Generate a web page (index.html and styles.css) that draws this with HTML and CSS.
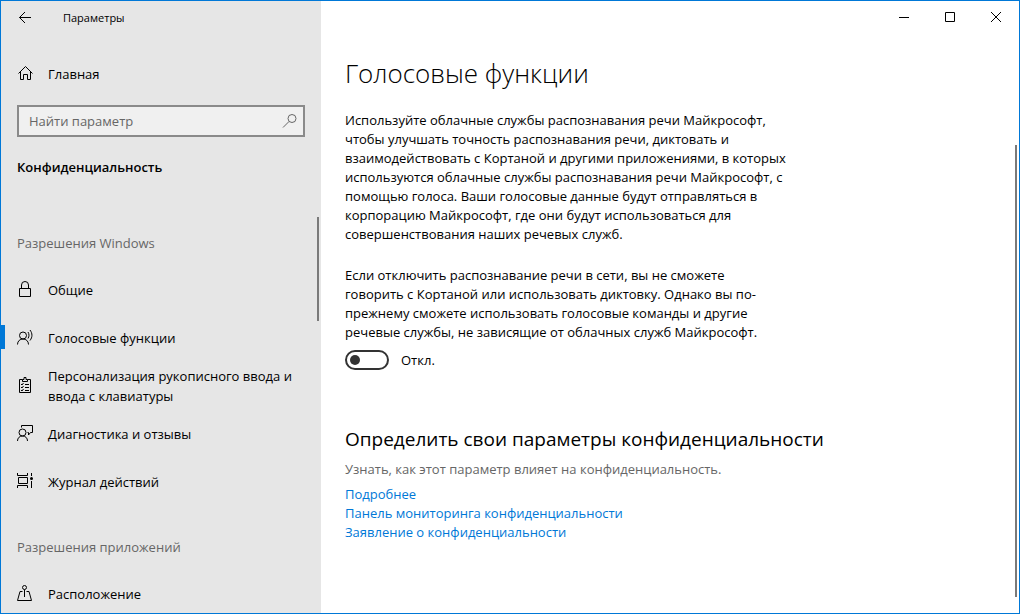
FILE: index.html
```html
<!DOCTYPE html>
<html lang="ru">
<head>
    <meta charset="UTF-8">
    <meta name="viewport" content="width=device-width, initial-scale=1.0">
    <title>Параметры</title>
    <link rel="stylesheet" href="styles.css">
</head>
<body>
    <div class="window">
        <aside class="sidebar">
            <header class="sidebar-top">
                <button type="button" class="back" aria-label="Назад">
                    <svg class="icon" viewBox="0 0 16 16"><path d="M14 8.500H2.500M8 3L2.500 8.500 8 14"/></svg>
                </button>
                <span class="app-title">Параметры</span>
            </header>

            <a class="nav-item home" href="#">
                <svg class="icon" viewBox="0 0 16 16"><path d="M1.500 8.500l7-7 7 7M3.500 7v7.500h3v-5h4v5h3V7"/></svg>
                <span>Главная</span>
            </a>

            <form class="search">
                <input type="search" class="search-input" placeholder="Найти параметр" aria-label="Найти параметр">
                <button type="submit" class="search-button" aria-label="Найти">
                    <svg class="icon" viewBox="0 0 16 16"><circle cx="10" cy="5.500" r="4"/><path d="M7 8.500l-6 6"/></svg>
                </button>
            </form>

            <h2 class="section">Конфиденциальность</h2>

            <nav class="nav">
                <h3 class="group">Разрешения Windows</h3>
                <a class="nav-item" href="#">
                    <svg class="icon" viewBox="0 0 16 16"><path d="M2.500 7.500h11v8h-11zM4.500 7.500V4a3.500 3.500 0 0 1 7 0v3.500"/></svg>
                    <span>Общие</span>
                </a>
                <a class="nav-item active" href="#" aria-current="page">
                    <svg class="icon" viewBox="0 0 16 16"><circle cx="6" cy="6.500" r="3.500"/><path d="M.5 15.500c0-3.500 2.500-5.500 5.500-5.500s5.500 2 5.500 5.500M11 3c1.300 2 1.300 4.500 0 6.500M13 1c2.600 3.500 2.600 7 0 10.500"/></svg>
                    <span>Голосовые функции</span>
                </a>
                <a class="nav-item" href="#">
                    <svg class="icon" viewBox="0 0 16 16"><path d="M5.500 2.500h-3v13h11v-13h-3M5.500 4.500v-2h1.500v-2h2v2h1.500v2zM8 7.500h4M8 10.500h4M8 13.500h4M4 7l1 1 1.500-2M4 10l1 1 1.500-2M4 13l1 1 1.500-2"/></svg>
                    <span>Персонализация рукописного ввода и ввода с клавиатуры</span>
                </a>
                <a class="nav-item" href="#">
                    <svg class="icon" viewBox="0 0 16 16"><circle cx="5.500" cy="7.500" r="3.500"/><path d="M.5 16c0-3 2-5 5-5s5 2 5 5M4.500 2.500v-2h11v7h-2l-2 2.500V7.500h-1"/></svg>
                    <span>Диагностика и отзывы</span>
                </a>
                <a class="nav-item" href="#">
                    <svg class="icon" viewBox="0 0 16 16"><path d="M.5 0v2.500h10V0M1.500 4.500h9v6h-9zM.5 15v-2.500h10V15M14.500 0v3M14.500 8v7"/><circle class="dot" cx="14.500" cy="5.500" r="1.500"/></svg>
                    <span>Журнал действий</span>
                </a>
                <h3 class="group">Разрешения приложений</h3>
                <a class="nav-item" href="#">
                    <svg class="icon" viewBox="0 0 16 16"><circle cx="7.500" cy="2.500" r="2"/><path d="M7.500 4.500V12M5.500 6.500H3l-2.500 9h14L12 6.500H9.500"/></svg>
                    <span>Расположение</span>
                </a>
            </nav>
            <div class="scrollbar scrollbar-nav"></div>
        </aside>

        <main class="main">
            <div class="caption-buttons">
                <button type="button" aria-label="Свернуть"><svg class="glyph" viewBox="0 0 10 10"><path d="M0 5.500h10"/></svg></button>
                <button type="button" aria-label="Развернуть"><svg class="glyph" viewBox="0 0 10 10"><path d="M.5.5h9v9h-9z"/></svg></button>
                <button type="button" aria-label="Закрыть"><svg class="glyph" viewBox="0 0 10 10"><path d="M0 0l10 10M10 0L0 10"/></svg></button>
            </div>

            <div class="content">
                <h1>Голосовые функции</h1>
                <p class="text">Используйте облачные службы распознавания речи Майкрософт, чтобы улучшать точность распознавания речи, диктовать и взаимодействовать с Кортаной и другими приложениями, в которых используются облачные службы распознавания речи Майкрософт, с помощью голоса. Ваши голосовые данные будут отправляться в корпорацию Майкрософт, где они будут использоваться для совершенствования наших речевых служб.</p>
                <p class="text text-narrow">Если отключить распознавание речи в сети, вы не сможете говорить с Кортаной или использовать диктовку. Однако вы по-прежнему сможете использовать голосовые команды и другие речевые службы, не зависящие от облачных служб Майкрософт.</p>
                <label class="toggle">
                    <input type="checkbox" class="switch" role="switch">
                    <span>Откл.</span>
                </label>

                <h2 class="subtitle">Определить свои параметры конфиденциальности</h2>
                <p class="hint">Узнать, как этот параметр влияет на конфиденциальность.</p>
                <ul class="links">
                    <li><a href="#">Подробнее</a></li>
                    <li><a href="#">Панель мониторинга конфиденциальности</a></li>
                    <li><a href="#">Заявление о конфиденциальности</a></li>
                </ul>
            </div>
            <div class="scrollbar scrollbar-main"></div>
        </main>
    </div>
</body>
</html>
```

FILE: styles.css
```css
* {
    box-sizing: border-box;
}
body {
    margin: 0;
    font-family: "Open Sans", "Noto Sans", sans-serif;
    font-size: 13px;
    line-height: 19px;
    color: #000;
    background: #fff;
}
h1, h2, h3, p, ul {
    margin: 0;
    padding: 0;
}
a {
    color: inherit;
    text-decoration: none;
}
button {
    display: flex;
    align-items: center;
    justify-content: center;
    padding: 0;
    border: 0;
    background: none;
    color: inherit;
}
.window {
    display: flex;
    height: 100vh;
    border: 1px solid #0078d7;
    overflow: hidden;
}
.icon {
    flex: none;
    width: 16px;
    height: 16px;
    fill: none;
    stroke: currentColor;
}
.icon .dot {
    fill: currentColor;
    stroke: none;
}

/* sidebar */
.sidebar {
    position: relative;
    flex: none;
    width: 320px;
    background: #e6e6e6;
    overflow: hidden;
}
.sidebar-top {
    display: flex;
    align-items: center;
    height: 32px;
    margin-bottom: 17px;
}
.back {
    width: 48px;
    height: 32px;
}
.app-title {
    margin-left: 14px;
    font-size: 11px;
}
.nav-item {
    position: relative;
    display: flex;
    align-items: center;
    gap: 15px;
    height: 48px;
    padding: 0 16px;
    line-height: 20px;
}
.nav-item .icon {
    margin-bottom: 2px;
}
.nav-item.active::before {
    content: "";
    position: absolute;
    left: 0;
    top: 11px;
    width: 4px;
    height: 24px;
    background: #0078d7;
}
.search {
    display: flex;
    height: 32px;
    margin: 7px 16px 20px;
    border: 2px solid #8a8a8a;
    background: #f0f0f0;
}
.search-input {
    flex: 1;
    min-width: 0;
    padding: 0 0 0 10px;
    border: 0;
    outline: 0;
    background: none;
    font: inherit;
}
.search-input::placeholder {
    color: #666;
}
.search-button {
    width: 26px;
    color: #666;
}
.section {
    margin: 0 16px 25px;
    font-size: 13px;
    font-weight: 600;
    line-height: 20px;
}
.group {
    padding: 32px 16px 14px;
    font-size: 13px;
    font-weight: 400;
    line-height: 18px;
    color: #666;
}

/* content */
.main {
    position: relative;
    flex: 1;
    min-width: 0;
}
.caption-buttons {
    display: flex;
    justify-content: flex-end;
    height: 32px;
}
.caption-buttons button {
    width: 46px;
}
.glyph {
    width: 10px;
    height: 10px;
    fill: none;
    stroke: #000;
}
.content {
    padding: 20px 24px;
}
h1 {
    margin-bottom: 18px;
    font-size: 26px;
    font-weight: 350;
    line-height: 40px;
}
.text {
    max-width: 452px;
    margin-bottom: 22px;
}
.text-narrow {
    max-width: 424px;
    margin-bottom: 8px;
}
.toggle {
    display: flex;
    align-items: center;
    gap: 12px;
    width: max-content;
}
.switch {
    appearance: none;
    display: flex;
    align-items: center;
    width: 44px;
    height: 20px;
    margin: 0;
    padding: 0 3px;
    border: 2px solid #333;
    border-radius: 10px;
}
.switch::before {
    content: "";
    width: 10px;
    height: 10px;
    border-radius: 5px;
    background: #333;
}
.switch:checked {
    justify-content: flex-end;
}
.subtitle {
    margin: 56px 0 8px;
    font-size: 19px;
    font-weight: 400;
    line-height: 26px;
}
.hint {
    margin-bottom: 6px;
    color: #666;
}
.links {
    list-style: none;
}
.links a {
    color: #0078d7;
}

/* thin scroll thumbs over the panes */
.scrollbar {
    position: absolute;
    right: 2px;
    width: 2px;
    background: #7a7a7a;
}
.scrollbar-nav {
    top: 216px;
    height: 104px;
}
.scrollbar-main {
    top: 144px;
    bottom: 16px;
}
```
